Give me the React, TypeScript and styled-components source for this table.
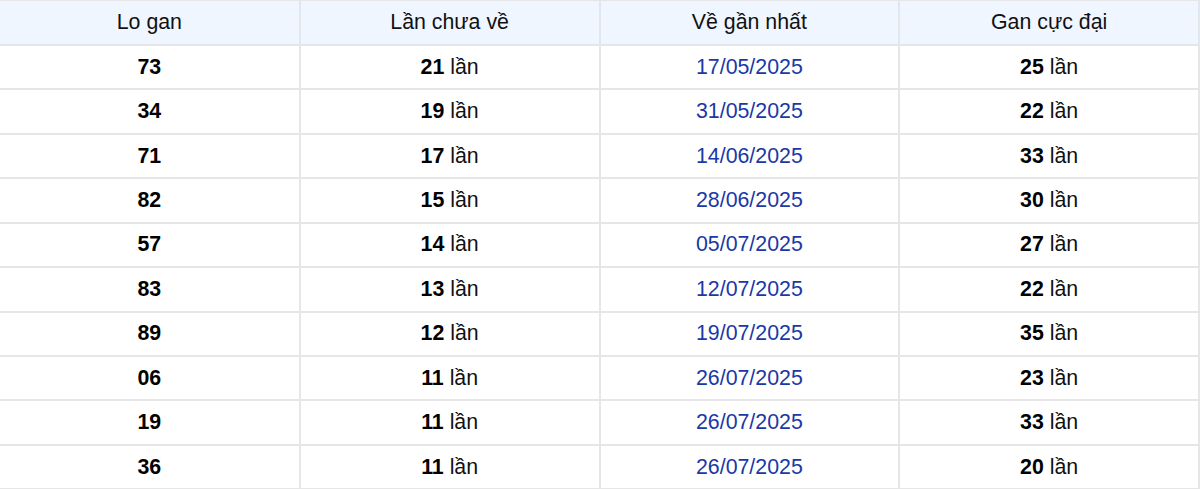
import styled, { createGlobalStyle } from "styled-components";

const GlobalStyle = createGlobalStyle`
  html, body {
    margin: 0;
    padding: 0;
    background: #ffffff;
  }
  body {
    font-family: "Liberation Sans", Arial, sans-serif;
  }
`;

const rows = [
  { lo: "73", streak: 21, last: "17/05/2025", max: 25 },
  { lo: "34", streak: 19, last: "31/05/2025", max: 22 },
  { lo: "71", streak: 17, last: "14/06/2025", max: 33 },
  { lo: "82", streak: 15, last: "28/06/2025", max: 30 },
  { lo: "57", streak: 14, last: "05/07/2025", max: 27 },
  { lo: "83", streak: 13, last: "12/07/2025", max: 22 },
  { lo: "89", streak: 12, last: "19/07/2025", max: 35 },
  { lo: "06", streak: 11, last: "26/07/2025", max: 23 },
  { lo: "19", streak: 11, last: "26/07/2025", max: 33 },
  { lo: "36", streak: 11, last: "26/07/2025", max: 20 },
];

const App = () => {
  return (
    <>
      <GlobalStyle />
      <StyledTable>
        <thead>
          <tr>
            <HeadCell>Lo gan</HeadCell>
            <HeadCell>Lần chưa về</HeadCell>
            <HeadCell>Về gần nhất</HeadCell>
            <HeadCell>Gan cực đại</HeadCell>
          </tr>
        </thead>
        <tbody>
          {rows.map((r, i) => (
            <tr key={i}>
              <Cell>
                <b>{r.lo}</b>
              </Cell>
              <Cell>
                <b>{r.streak}</b> lần
              </Cell>
              <Cell $date>{r.last}</Cell>
              <Cell>
                <b>{r.max}</b> lần
              </Cell>
            </tr>
          ))}
        </tbody>
      </StyledTable>
    </>
  );
};

export default App;

const StyledTable = styled.table`
  width: 1200px;
  height: 489px;
  border-collapse: collapse;
  table-layout: fixed;
  border-top: 1px solid #e6e6e6;

  tr {
    height: 44.45px;
  }

  th:first-child,
  td:first-child {
    border-left: none;
  }
`;

const HeadCell = styled.th`
  background-color: #eff6ff;
  color: #111111;
  font-weight: 400;
  font-size: 21.33px;
  text-align: center;
  padding: 0;
  border: 2px solid #e3e6ea;
  border-top: none;
`;

const Cell = styled.td<{ $date?: boolean }>`
  font-size: 21.33px;
  text-align: center;
  padding: 0;
  color: ${(p) => (p.$date ? "#1a38a6" : "#111111")};
  border: 2px solid #e6e6e6;

  b {
    font-weight: 700;
    color: #000;
  }
`;
